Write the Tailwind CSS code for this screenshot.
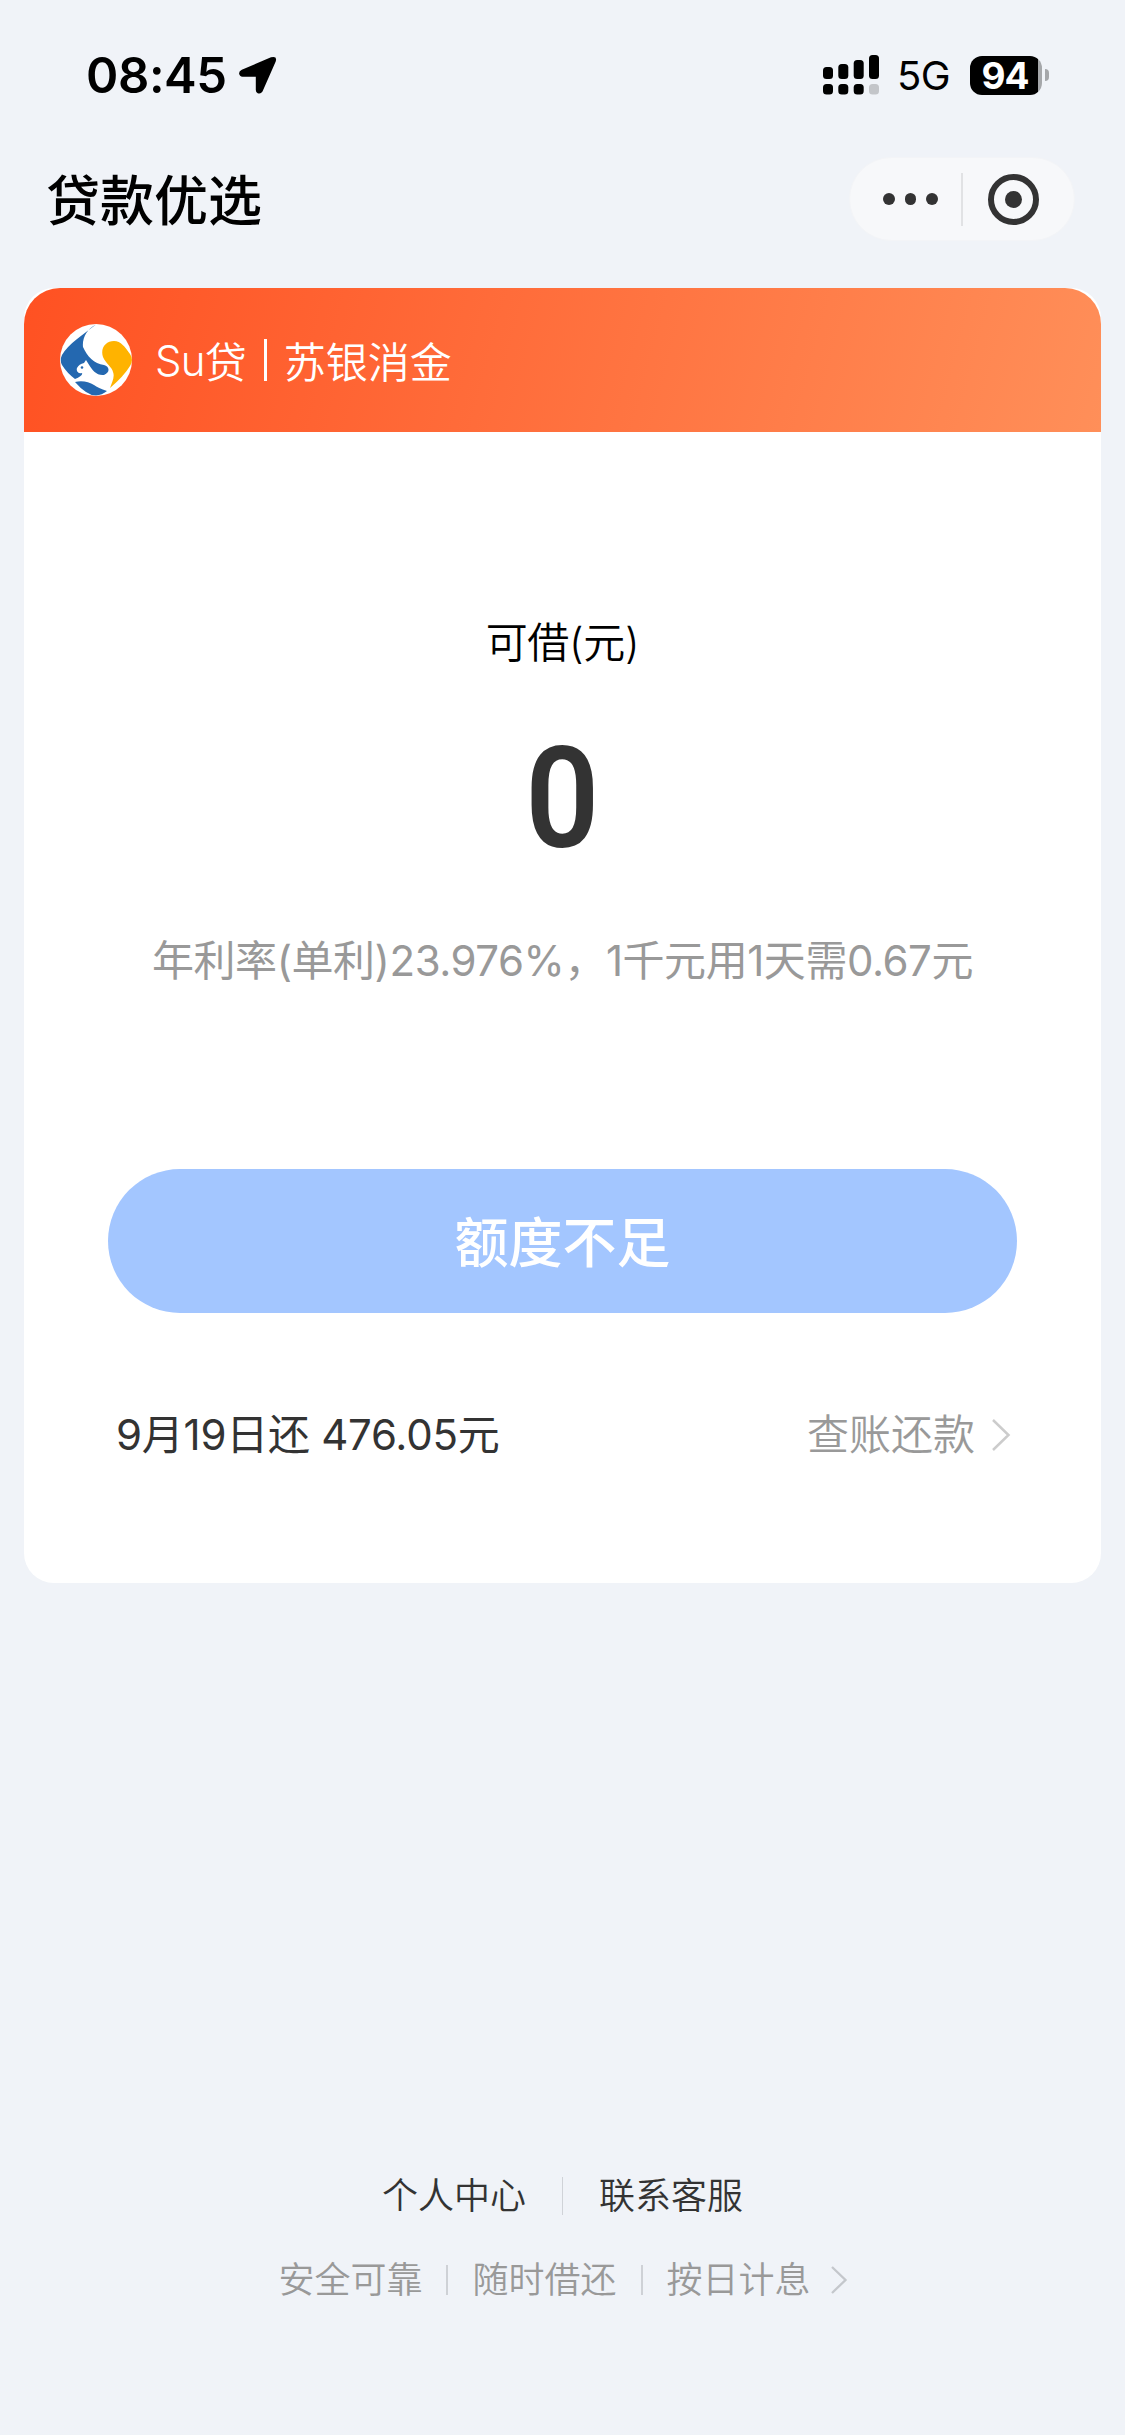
<!DOCTYPE html>
<html lang="zh-CN">
<head>
<meta charset="utf-8">
<title>贷款优选</title>
<script src="https://cdn.jsdelivr.net/npm/@tailwindcss/browser@4"></script>
</head>
<body class="bg-[#f0f3f8] font-['Inter','Noto_Sans_CJK_SC',sans-serif]">
<div class="flex h-[2435px] w-[1125px] flex-col overflow-hidden">

  <!-- Status bar -->
  <header class="flex h-[150px] shrink-0 items-center pl-[86px] pr-[76px]">
    <span class="w-[140px] whitespace-nowrap text-[49px] leading-none font-semibold tracking-[-0.4px] text-black">08:45</span>
    <svg class="ml-[12px] h-[40px] w-[40px]" viewBox="0 0 40 40"><path d="M3.800 14.800 33 2.300Q39.500 .500 37.700 6.500L24.500 36.500Q22.500 39.500 19.700 38.200Q17.800 37.500 17.800 35V21.700H4.500Q1.500 21.500 1.100 18.500Q1 16 3.800 14.800Z" fill="#000"/></svg>
    <div class="ml-auto flex items-center">
      <svg class="h-[40px] w-[57px]" viewBox="0 0 57 40"><g fill="#000"><rect x="0" y="12" width="10" height="12" rx="3.500"/><rect x="15.300" y="9" width="10" height="15" rx="3.500"/><rect x="30.700" y="5" width="10" height="19" rx="3.500"/><rect x="46" y="0" width="10" height="24" rx="3.500"/><rect x="0" y="29" width="10" height="10.500" rx="3.500"/><rect x="15.300" y="29" width="10" height="10.500" rx="3.500"/><rect x="30.700" y="29" width="10" height="10.500" rx="3.500"/></g><rect x="46" y="29" width="10" height="10.500" rx="3.500" fill="#c3c5c9"/></svg>
      <span class="ml-[17px] w-[56px] pt-[2px] text-[40px] leading-none font-normal tracking-[-0.6px] text-black">5G</span>
      <div class="ml-[17px] flex items-center">
        <div class="flex h-[39px] w-[72px] items-center rounded-[12px] bg-linear-to-r from-black from-95% to-[#a5a7aa] to-95%">
          <span class="w-[70px] text-center text-[37px] leading-[39px] font-bold tracking-[-1px] text-white">94</span>
        </div>
        <div class="ml-[3px] h-[12px] w-[4px] rounded-r-full bg-[#a5a7aa]"></div>
      </div>
    </div>
  </header>

  <!-- Title and capsule menu -->
  <nav class="flex h-[98px] shrink-0 items-center justify-between pl-[46px] pr-[50px]">
    <h1 class="pt-[5px] text-[54px] leading-none font-medium text-black">贷款优选</h1>
    <div class="flex h-[84px] w-[226px] items-center rounded-full border border-[#f3f4f7] bg-[#f7f8fa]">
      <div class="flex w-[111px] justify-center gap-[10px] pl-[10px]">
        <i class="size-[11.5px] rounded-full bg-[#333]"></i><i class="size-[11.5px] rounded-full bg-[#333]"></i><i class="size-[11.5px] rounded-full bg-[#333]"></i>
      </div>
      <div class="h-[53px] w-[2px] bg-[#e1e2e4]"></div>
      <div class="ml-[25px] flex size-[51px] items-center justify-center rounded-full border-[6px] border-[#333]"><i class="size-[17px] rounded-full bg-[#333]"></i></div>
    </div>
  </nav>

  <!-- Loan card -->
  <main class="mx-[24px] mt-[40px] flex h-[1295px] shrink-0 flex-col rounded-[30px] bg-white">
    <div class="flex h-[144px] shrink-0 items-center rounded-t-[36px] bg-linear-[105deg] from-[#ff5122] to-[#ff8f59] pl-[36px]">
      <svg class="size-[72px]" viewBox="0 0 72 72">
        <circle cx="36" cy="36" r="36" fill="#fff"/>
        <path d="M36 .500C24 10 8 20 2 31Q-.500 36 2 41Q7 49 15 55C20 53 23 51 22 49C18 50 16 47 17 44Q19 40 24 39L26 36L28.500 40C32 46 37 52 44 51C51 48 49 42 44 41C34 40 27 32 23 23C22 14 27 5 36 .500Z" fill="#2468b0"/>
        <path d="M15 58C22 56 29 58 34 61Q38 64 47 67Q42 71 36 71.500Q31 71.500 26 68Q20 64 15 58Z" fill="#2468b0"/>
        <path d="M50 64C52 58 55 53 53 48C52 43 46 40 43 33C40 24 46 17 54 17C61 17 65 23 70 30Q74 36 70 42Q64 52 50 64Z" fill="#ffb300"/>
        <circle cx="22" cy="43.500" r="1.300" fill="#2468b0"/>
      </svg>
      <div class="ml-[23px] flex items-center text-[42px] leading-none text-white">
        <span class="pt-[1px] font-[350] tracking-[-0.8px]">Su</span><span class="font-['Noto_Sans_CJK_SC'] font-[350]">贷</span><i class="mr-[17px] ml-[17px] h-[42px] w-[3px] bg-white"></i><span class="font-['Noto_Sans_CJK_SC'] font-[350]">苏银消金</span>
      </div>
    </div>

    <div class="flex flex-col items-center">
      <p class="mt-[190px] text-[42px] leading-[42px] font-[350] tracking-[-0.3px] text-black">可借(元)</p>
      <p class="mt-[63px] h-[144px] scale-x-[.92] font-['Roboto'] text-[141px] leading-[144px] font-semibold text-[#333]">0</p>
      <p class="mt-[69px] text-[42px] leading-[42px] font-[380] tracking-[-0.45px] whitespace-nowrap text-[#999]">年利率(单利)23.976%，1千元用1天需0.67元</p>
    </div>

    <button class="mx-[84px] mt-[187px] h-[144px] shrink-0 rounded-full bg-[#a3c6ff] pt-[6px] text-[54px] leading-none font-medium text-white">额度不足</button>

    <div class="mt-[101px] flex h-[42px] items-center justify-between pr-[90px] pl-[92px] text-[42px] leading-none">
      <span class="font-[380] tracking-[-0.25px] text-[#333]">9月19日还 476.05元</span>
      <a class="flex items-center font-[350] text-[#999]">查账还款<svg class="ml-[16px] h-[32px] w-[20px]" viewBox="0 0 20 32" fill="none" stroke="#ccc" stroke-width="2.500"><path d="M2 1 17.500 16 2 31"/></svg></a>
    </div>
  </main>

  <!-- Footer links -->
  <footer class="mt-auto mb-[137px] flex flex-col items-center gap-[47px] text-[36px] leading-[36px] font-[350]">
    <div class="flex items-center text-[#333]">
      <a>个人中心</a><i class="mx-[36px] h-[38px] w-[1px] bg-[#d0d3d8]"></i><a>联系客服</a>
    </div>
    <div class="flex items-center pl-[1px] text-[#999]">
      <span>安全可靠</span><i class="mx-[24px] h-[30px] w-[2px] bg-[#ced1d6]"></i><span>随时借还</span><i class="mx-[24px] h-[30px] w-[2px] bg-[#ced1d6]"></i><span>按日计息</span>
      <svg class="ml-[19px] h-[28px] w-[18px]" viewBox="0 0 18 28" fill="none" stroke="#c4c7cc" stroke-width="2.300"><path d="M2 1 15.500 14 2 27"/></svg>
    </div>
  </footer>
</div>
</body>
</html>
